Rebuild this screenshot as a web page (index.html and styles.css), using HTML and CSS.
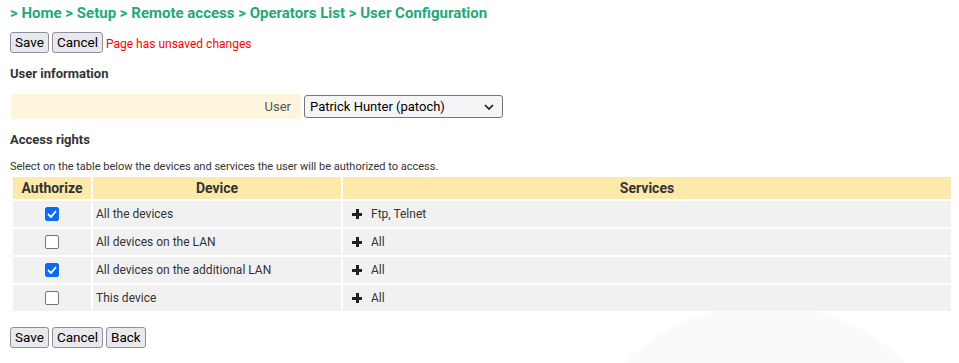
FILE: index.html
```html
<!DOCTYPE html>
<html>
<head>
<meta charset="utf-8">
<link rel="stylesheet" href="styles.css">
</head>
<body>
<div class="frame">
<div class="bg-circle"></div>
<main class="page">
  <h1 class="crumbs">&gt; Home &gt; Setup &gt; Remote access &gt; Operators List &gt; User Configuration</h1>
  <div class="actions top">
    <button class="btn">Save</button>
    <button class="btn">Cancel</button>
    <span class="unsaved">Page has unsaved changes</span>
  </div>

  <h2 class="section">User information</h2>
  <div class="field-row">
    <label class="field-label">User</label>
    <div class="select">
      <span>Patrick Hunter (patoch)</span>
      <svg class="chev" width="10" height="6" viewBox="0 0 10 6"><path d="M1 1l4 4 4-4" fill="none" stroke="#111" stroke-width="1.6"/></svg>
    </div>
  </div>

  <h2 class="section">Access rights</h2>
  <p class="hint">Select on the table below the devices and services the user will be authorized to access.</p>

  <table class="rights">
    <colgroup><col class="c1"><col class="c2"><col class="c3"></colgroup>
    <thead>
      <tr><th>Authorize</th><th>Device</th><th>Services</th></tr>
    </thead>
    <tbody>
      <tr>
        <td class="chk"><span class="cb on"><svg width="10" height="8" viewBox="0 0 10 8"><path d="M1 4l3 3 5-6" fill="none" stroke="#fff" stroke-width="1.8"/></svg></span></td>
        <td>All the devices</td>
        <td><span class="plus"></span>Ftp, Telnet</td>
      </tr>
      <tr>
        <td class="chk"><span class="cb"></span></td>
        <td>All devices on the LAN</td>
        <td><span class="plus"></span>All</td>
      </tr>
      <tr>
        <td class="chk"><span class="cb on"><svg width="10" height="8" viewBox="0 0 10 8"><path d="M1 4l3 3 5-6" fill="none" stroke="#fff" stroke-width="1.8"/></svg></span></td>
        <td>All devices on the additional LAN</td>
        <td><span class="plus"></span>All</td>
      </tr>
      <tr>
        <td class="chk"><span class="cb"></span></td>
        <td>This device</td>
        <td><span class="plus"></span>All</td>
      </tr>
    </tbody>
  </table>

  <div class="actions bottom">
    <button class="btn">Save</button>
    <button class="btn">Cancel</button>
    <button class="btn">Back</button>
  </div>
</main>
</div>
</body>
</html>
```
FILE: styles.css
```css
html, body {
  margin: 0;
  padding: 0;
  background: #fff;
}
body {
  font-family: Roboto, "Liberation Sans", sans-serif;
  color: #333;
}
.frame {
  position: relative;
  width: 959px;
  height: 363px;
  overflow: hidden;
}
.bg-circle {
  position: absolute;
  left: 565px;
  top: 305px;
  width: 400px;
  height: 400px;
  border-radius: 50%;
  background: #fafafa;
  z-index: 0;
}
.page {
  position: relative;
  z-index: 1;
  padding: 3px 0 0 10px;
}
.crumbs {
  margin: 0;
  font-size: 15px;
  line-height: 20px;
  font-weight: bold;
  color: #22a87a;
}
.actions {
  display: flex;
  align-items: center;
  gap: 3px;
}
.actions.top {
  margin-top: 9px;
}
.actions.bottom {
  margin-top: 14px;
}
.btn {
  font-family: Roboto, "Liberation Sans", sans-serif;
  font-size: 13.5px;
  height: 21px;
  padding: 0 4px;
  margin: 0;
  color: #000;
  background: #e9e9ed;
  border: 1px solid #8f8f9d;
  border-radius: 3px;
  line-height: 19px;
}
.unsaved {
  font-size: 12px;
  color: #f00;
  margin-left: 0;
  padding-top: 2px;
}
.section {
  margin: 13px 0 0 0;
  font-size: 13px;
  line-height: 16px;
  font-weight: bold;
  color: #333;
}
.field-row {
  display: flex;
  align-items: center;
  margin: 12px 0 0 1px;
  gap: 3px;
}
.field-label {
  width: 280px;
  height: 25px;
  padding-right: 10px;
  background: #fff5dc;
  font-size: 13px;
  line-height: 25px;
  text-align: right;
  color: #555;
}
.select {
  display: flex;
  align-items: center;
  justify-content: space-between;
  box-sizing: border-box;
  width: 199px;
  height: 23px;
  padding: 0 8px 0 5px;
  border: 1px solid #767676;
  border-radius: 3px;
  background: #f5f5f8;
  font-size: 13px;
  color: #000;
}
.section + .hint {
  margin-top: 12px;
}
.hint {
  margin: 0;
  font-size: 11px;
  line-height: 14px;
  color: #333;
}
.rights {
  margin: 1px 0 0 1px;
  width: 942px;
  table-layout: fixed;
  border-collapse: separate;
  border-spacing: 2px;
  font-size: 12px;
  color: #333;
}
.rights col.c1 { width: 78px; }
.rights col.c2 { width: 248px; }
.rights th {
  background: #fde9a9;
  height: 22px;
  padding: 0;
  font-size: 14px;
  font-weight: bold;
  text-align: center;
  color: #333;
}
.rights td {
  background: #f1f1f1;
  height: 26px;
  padding: 0 0 0 3px;
  vertical-align: middle;
}
.rights td.chk {
  padding: 0;
  text-align: center;
}
.cb {
  display: inline-flex;
  align-items: center;
  justify-content: center;
  box-sizing: border-box;
  width: 14px;
  height: 14px;
  border: 1px solid #767676;
  border-radius: 2px;
  background: #fff;
  vertical-align: middle;
}
.cb.on {
  background: #0b6cf3;
  border-color: #0b6cf3;
}
.plus {
  display: inline-block;
  width: 10px;
  height: 10px;
  margin: 0 9px 0 6px;
  vertical-align: -1px;
  background:
    linear-gradient(#222, #222) center / 10px 3px no-repeat,
    linear-gradient(#222, #222) center / 3px 10px no-repeat;
}
```
